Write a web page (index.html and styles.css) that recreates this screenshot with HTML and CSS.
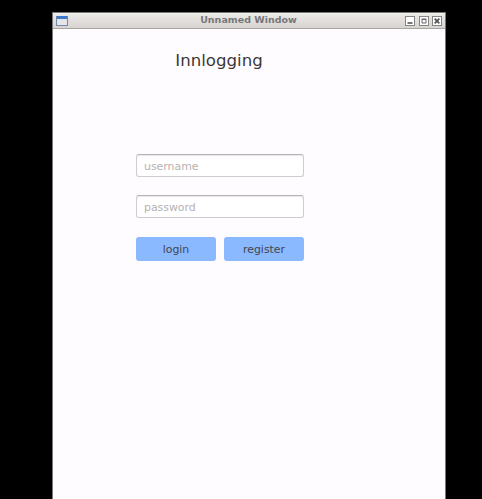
FILE: index.html
```html
<!DOCTYPE html>
<html lang="no">
<head>
<meta charset="utf-8">
<title>Innlogging</title>
<link rel="stylesheet" href="styles.css">
</head>
<body>
<div class="window">
  <header class="titlebar">
    <svg class="app-icon" width="12" height="10" viewBox="0 0 12 10"><rect x=".5" y=".5" width="11" height="9" fill="#e6e6e8" stroke="#7189ad"/><path d="M1 0h10v3H1z" fill="#3d78cc"/></svg>
    <span class="title">Unnamed Window</span>
    <div class="controls">
      <svg width="10" height="10" viewBox="0 0 10 10"><rect x=".5" y=".5" width="9" height="9" fill="#fff" stroke="#858585"/><path d="M2.5 7h5" stroke="#555" stroke-width="1.6"/></svg>
      <svg width="10" height="10" viewBox="0 0 10 10"><rect x=".5" y=".5" width="9" height="9" fill="#fff" stroke="#858585"/><path d="M3 3.5h4v3.5H3zM2.5 3h5" fill="none" stroke="#666"/></svg>
      <svg width="10" height="10" viewBox="0 0 10 10"><rect x=".5" y=".5" width="9" height="9" fill="#fff" stroke="#858585"/><path d="M2.7 2.7l4.6 4.6M7.3 2.7l-4.6 4.6" stroke="#555" stroke-width="1.8"/></svg>
    </div>
  </header>
  <main class="content">
    <h1>Innlogging</h1>
    <form class="form">
      <input type="text" placeholder="username">
      <input type="password" placeholder="password">
      <div class="actions">
        <button type="button">login</button>
        <button type="button">register</button>
      </div>
    </form>
  </main>
</div>
</body>
</html>
```
FILE: styles.css
```css
* { box-sizing: border-box; }
body {
  margin: 0;
  height: 499px;
  overflow: hidden;
  background: #000;
  font-family: "DejaVu Sans", sans-serif;
}
.window {
  width: 394px;
  height: 487px;
  margin: 12px 0 0 52px;
  border: 1px solid #777;
  border-bottom: 0;
  background: #fffcff;
}
.titlebar {
  display: flex;
  align-items: center;
  height: 16px;
  padding: 0 3px;
  border-top: 1px solid #f0f0ee;
  border-bottom: 1px solid #aaa6a3;
  background: linear-gradient(#eae9e6, #d7d3d1);
}
.app-icon { flex: none; }
.title {
  flex: 1;
  padding: 0 0 2px 24px;
  text-align: center;
  font-size: 9.5px;
  font-weight: bold;
  line-height: 12px;
  color: #777;
}
.controls {
  display: flex;
  gap: 3.5px;
}
.content { padding-top: 20px; }
h1 {
  width: 332px;
  margin: 0;
  text-align: center;
  font-size: 16.6px;
  font-weight: normal;
  line-height: 24px;
  color: #3b3839;
}
.form {
  width: 168px;
  margin: 81px 0 0 83px;
}
input {
  display: block;
  width: 168px;
  height: 23px;
  margin: 0 0 18.4px;
  padding: 1px 7px 0;
  border: 1px solid #cfcccf;
  border-top-color: #b5b3b5;
  border-radius: 3px;
  background: #fff;
  box-shadow: inset 0 1px 1px #e8e6e8;
  font: 10.9px "DejaVu Sans", sans-serif;
}
input::placeholder { color: #b5b2b1; opacity: 1; }
.actions {
  display: flex;
  gap: 8px;
}
button {
  flex: 1;
  height: 24px;
  padding: 1.5px 0 0;
  border: 0;
  border-radius: 3px;
  background: #8ab9ff;
  color: #444649;
  font: 10.9px "DejaVu Sans", sans-serif;
}
```
